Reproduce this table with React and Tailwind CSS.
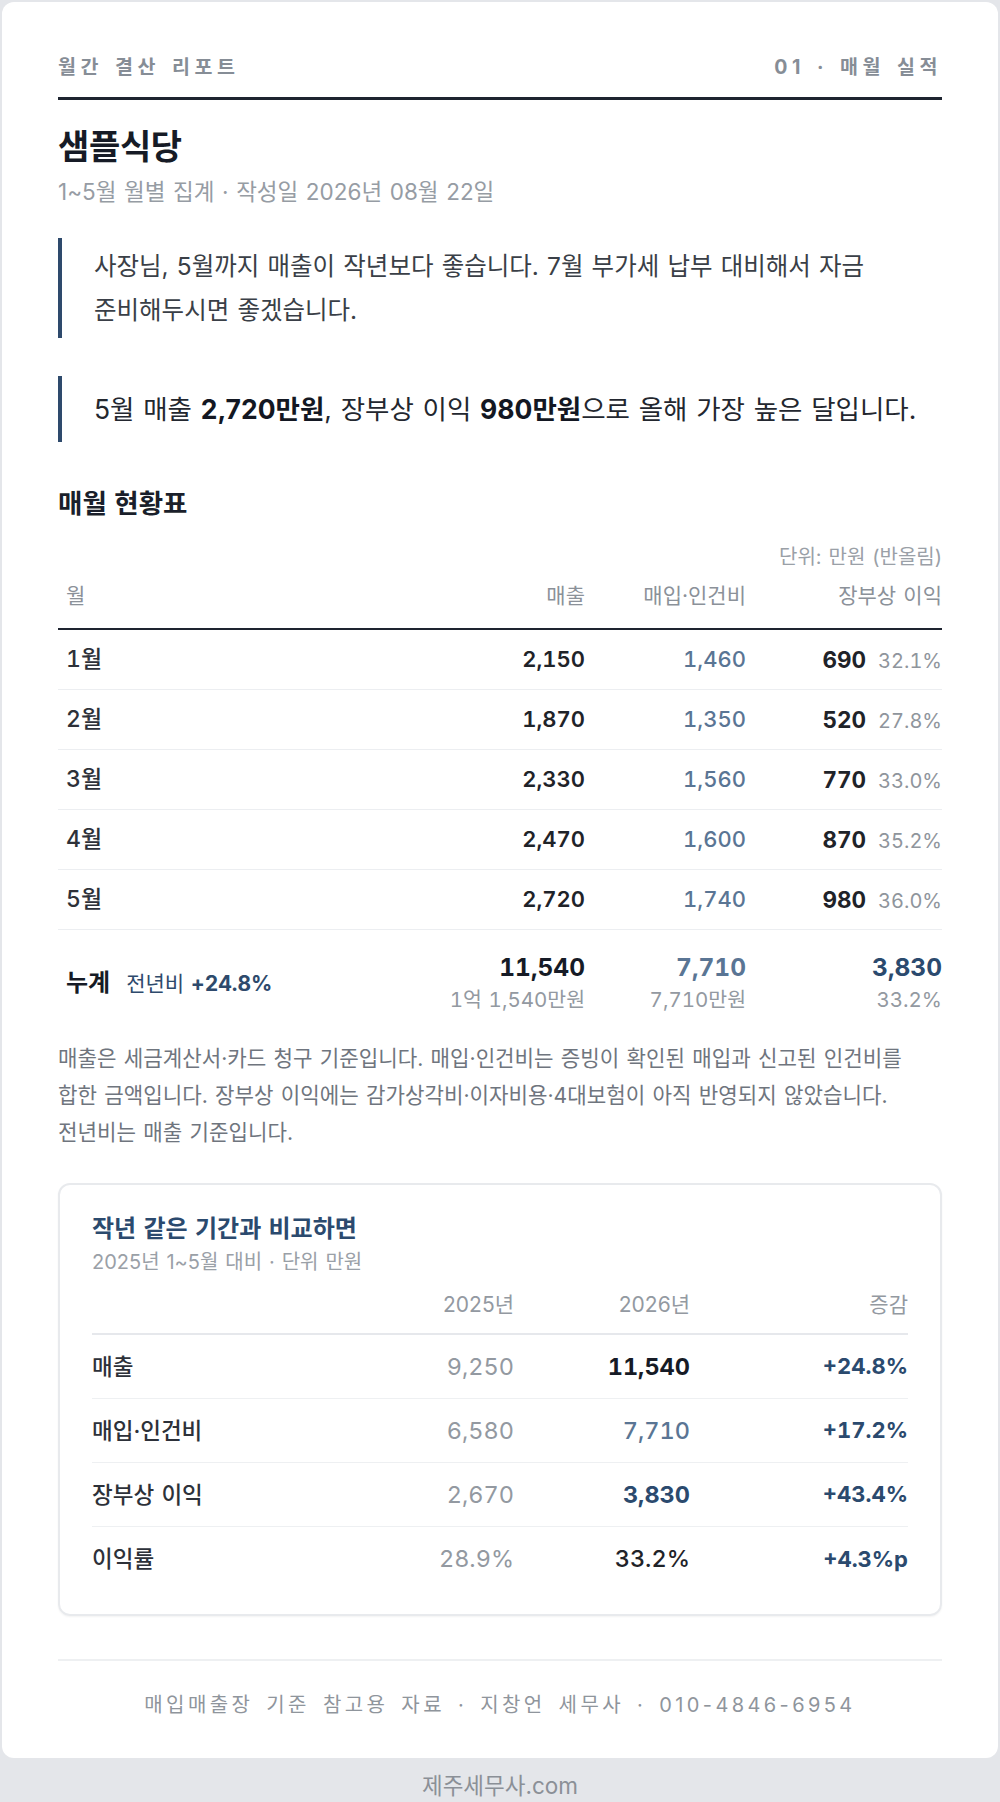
const months = [
  { m: '1월', sales: '2,150', cost: '1,460', profit: '690', rate: '32.1%' },
  { m: '2월', sales: '1,870', cost: '1,350', profit: '520', rate: '27.8%' },
  { m: '3월', sales: '2,330', cost: '1,560', profit: '770', rate: '33.0%' },
  { m: '4월', sales: '2,470', cost: '1,600', profit: '870', rate: '35.2%' },
  { m: '5월', sales: '2,720', cost: '1,740', profit: '980', rate: '36.0%' },
];

const compare = [
  { label: '매출', prev: '9,250', cur: '11,540', curClass: 'font-bold text-[#161b26]', diff: '+24.8%' },
  { label: '매입·인건비', prev: '6,580', cur: '7,710', curClass: 'font-medium text-[#5a7594]', diff: '+17.2%' },
  { label: '장부상 이익', prev: '2,670', cur: '3,830', curClass: 'font-bold text-[#2b4a6e]', diff: '+43.4%' },
  { label: '이익률', prev: '28.9%', cur: '33.2%', curClass: 'font-medium text-[#1f2329]', diff: '+4.3%p' },
];

const cols = 'grid grid-cols-[1fr_150px_161px_196px]';
const cmpCols = 'grid grid-cols-[1fr_176px_176px_218px]';

function MonthRow({ r }) {
  return (
    <div className={`${cols} h-[60px] items-center border-b border-[#eceef1] tabular-nums`}>
      <div className="pl-2 text-[23px] font-medium text-[#2d3139]">{r.m}</div>
      <div className="text-right text-[22px] font-semibold text-[#1f2329]">{r.sales}</div>
      <div className="text-right text-[22px] font-medium text-[#5a7594]">{r.cost}</div>
      <div className="flex items-baseline justify-end gap-[12px]">
        <span className="text-[22.5px] font-bold text-[#1f2329]">{r.profit}</span>
        <span className="text-[20px] text-[#8f959c]">{r.rate}</span>
      </div>
    </div>
  );
}

export default function App() {
  return (
    <div className="min-h-screen bg-[#e4e6ea] px-[2px] pt-[2px] font-['Inter','Noto_Sans_CJK_KR',sans-serif] break-keep [word-spacing:0.08em]">
      <div className="rounded-xl bg-white px-14 pt-[52px] pb-[38px]">
        <header className="flex h-7 items-center justify-between text-[19.5px] font-bold tracking-[4.5px] text-[#868d96] [word-spacing:3px]">
          <span>월간 결산 리포트</span>
          <span>01 · 매월 실적</span>
        </header>
        <div className="mt-[15px] h-[3px] bg-[#1e2430]" />

        <h1 className="mt-[25px] text-[34px] leading-[44px] font-bold tracking-[-0.01em] text-[#161b26]">샘플식당</h1>
        <p className="mt-2 text-[22.5px] leading-[30px] text-[#969ca4]">1~5월 월별 집계 · 작성일 2026년 08월 22일</p>

        <div className="mt-[31px] border-l-4 border-[#2e4a6c] py-[6px] pl-8 text-[24.5px] leading-[44px] text-[#3a3f47]">
          사장님, 5월까지 매출이 작년보다 좋습니다. 7월 부가세 납부 대비해서 자금 준비해두시면 좋겠습니다.
        </div>

        <div className="mt-[38px] border-l-4 border-[#2e4a6c] py-[11px] pl-8 text-[26.5px] leading-[44px] text-[#23272f]">
          5월 매출 <strong className="font-bold text-[#131722]">2,720만원</strong>, 장부상 이익{' '}
          <strong className="font-bold text-[#131722]">980만원</strong>으로 올해 가장 높은 달입니다.
        </div>

        <h2 className="mt-[44px] text-[26.5px] leading-[34px] font-bold text-[#1a1f2b]">매월 현황표</h2>
        <p className="mt-[23px] text-right text-[20px] leading-[28px] text-[#9aa0a7]">단위: 만원 (반올림)</p>

        <div className={`${cols} border-b-2 border-[#1e2430] pt-[11px] pb-[18px] text-[21px] leading-[28px] text-[#8b9199]`}>
          <div className="pl-2">월</div>
          <div className="text-right">매출</div>
          <div className="text-right">매입·인건비</div>
          <div className="text-right">장부상 이익</div>
        </div>

        {months.map((r) => (
          <MonthRow key={r.m} r={r} />
        ))}

        <div className={`${cols} items-center py-[22px] tabular-nums`}>
          <div className="flex items-baseline gap-[16px] pl-2">
            <span className="text-[24px] font-bold text-[#161b26]">누계</span>
            <span className="text-[21px] text-[#2e4a6c]">
              전년비 <span className="font-bold">+24.8%</span>
            </span>
          </div>
          <div className="text-right">
            <div className="text-[24.5px] leading-[30px] font-bold text-[#161b26]">11,540</div>
            <div className="mt-[5px] text-[20.5px] leading-[26px] text-[#9399a1]">1억 1,540만원</div>
          </div>
          <div className="text-right">
            <div className="text-[24.5px] leading-[30px] font-bold text-[#5a7594]">7,710</div>
            <div className="mt-[5px] text-[20.5px] leading-[26px] text-[#9399a1]">7,710만원</div>
          </div>
          <div className="text-right">
            <div className="text-[24.5px] leading-[30px] font-bold text-[#2b4a6e]">3,830</div>
            <div className="mt-[5px] text-[20.5px] leading-[26px] text-[#9399a1]">33.2%</div>
          </div>
        </div>

        <p className="mt-[5px] text-[21.2px] leading-[37px] text-[#6f757e]">
          매출은 세금계산서·카드 청구 기준입니다. 매입·인건비는 증빙이 확인된 매입과 신고된 인건비를 합한 금액입니다. 장부상 이익에는 감가상각비·이자비용·4대보험이 아직 반영되지 않았습니다. 전년비는 매출 기준입니다.
        </p>

        <section className="mt-8 rounded-xl border-2 border-[#e8eaed] px-8 pt-[29px] pb-[23px] shadow-[0_1px_2px_rgba(0,0,0,0.05)]">
          <h3 className="text-[24px] leading-[30px] font-semibold text-[#2b4a6e]">작년 같은 기간과 비교하면</h3>
          <p className="mt-1 text-[20px] leading-[28px] text-[#9aa0a7]">2025년 1~5월 대비 · 단위 만원</p>

          <div className={`${cmpCols} border-b-2 border-[#e6e8ec] pt-[15px] pb-[14px] text-[21px] leading-[28px] text-[#9399a1]`}>
            <div />
            <div className="text-right">2025년</div>
            <div className="text-right">2026년</div>
            <div className="text-right">증감</div>
          </div>

          {compare.map((r, i) => (
            <div
              key={r.label}
              className={`${cmpCols} h-[64px] items-center tabular-nums ${i < compare.length - 1 ? 'border-b border-[#eef0f2]' : ''}`}
            >
              <div className="text-[22.5px] font-medium text-[#2d3139]">{r.label}</div>
              <div className="text-right text-[23.5px] text-[#9399a1]">{r.prev}</div>
              <div className={`text-right text-[23.5px] ${r.curClass}`}>{r.cur}</div>
              <div className="text-right text-[22px] font-bold text-[#2b4a6e]">{r.diff}</div>
            </div>
          ))}
        </section>

        <footer className="mt-[43px] border-t-2 border-[#eef0f2] pt-[29px] text-center text-[20px] leading-[30px] tracking-[0.17em] text-[#8f959c] [word-spacing:4px]">
          매입매출장 기준 참고용 자료 · 지창언 세무사 · 010-4846-6954
        </footer>
      </div>
      <p className="mt-[14px] text-center text-[22.5px] leading-[28px] text-[#8b9097]">제주세무사.com</p>
    </div>
  );
}
